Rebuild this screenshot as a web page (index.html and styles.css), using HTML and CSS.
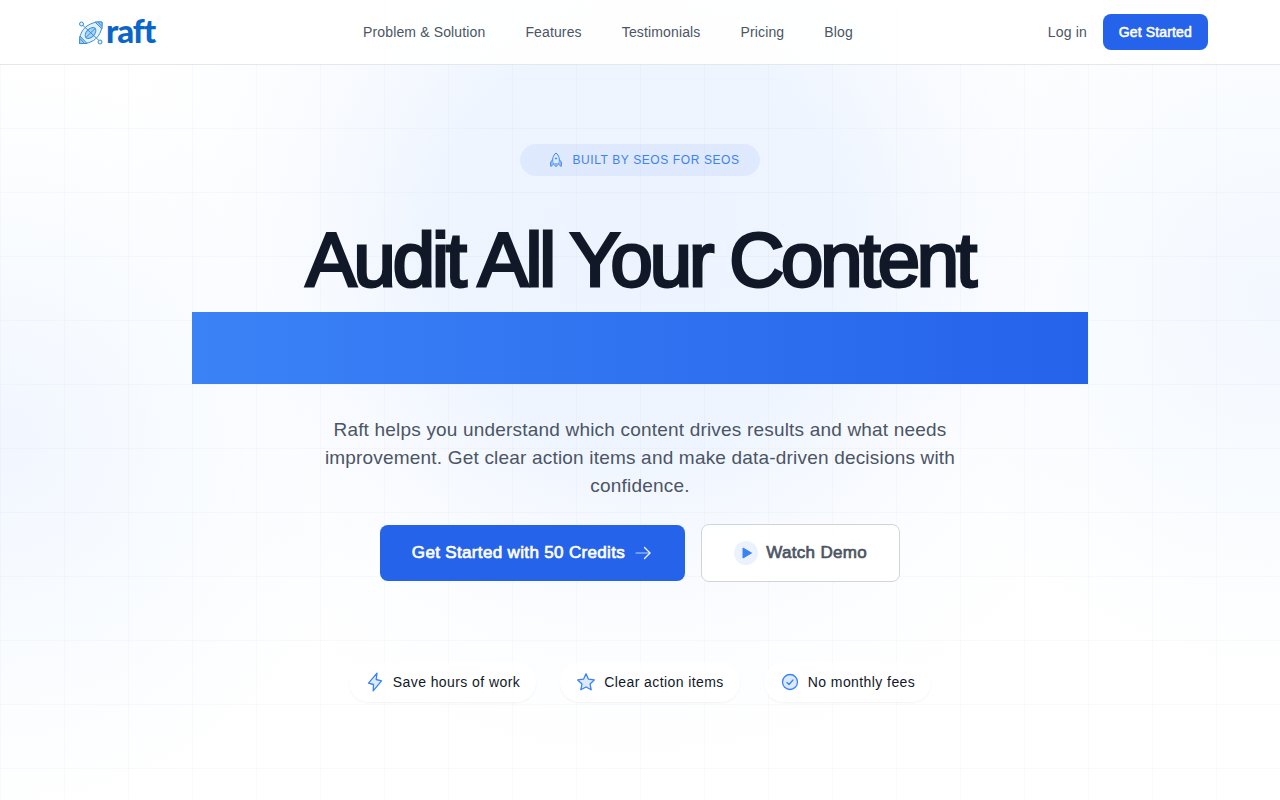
FILE: index.html
```html
<!DOCTYPE html>
<html lang="en">

<head>
  <meta charset="UTF-8">
  <meta name="viewport" content="width=device-width, initial-scale=1">
  <title>Raft</title>
  <link rel="stylesheet" href="styles.css">
</head>

<body>
  <header>
    <div class="header-inner">
      <a href="#" class="logo">
        <svg width="26" height="26" viewBox="0 0 26 26" fill="none" stroke="#3a8fdb" stroke-width="1">
          <path d="M1.500 24.500C1 17 4 10.500 9 7C13 4.200 18 2.500 24 3C24.500 9 22.500 15.500 17.500 20C13 23.500 8 25 1.500 24.500Z" fill="#e3f1fc" />
          <path d="M2 17L9 24.500L1.500 24.500ZM17 3L24 10L24 3Z" fill="#a5d0f3" />
          <path d="M2.500 20L6 24M20 3L23.500 7" />
          <ellipse cx="12.500" cy="14" rx="6.500" ry="4" transform="rotate(-45 12.500 14)" fill="#a9d3f5" />
          <path d="M4.500 6L21.500 22M8 18.500L17 9.500" />
          <circle cx="3.500" cy="5" r="2" fill="#e3f1fc" />
          <circle cx="22" cy="23" r="2" fill="#e3f1fc" />
        </svg>
        <span>raft</span>
      </a>

      <nav>
        <ul>
          <li><a href="#">Problem &amp; Solution</a></li>
          <li><a href="#">Features</a></li>
          <li><a href="#">Testimonials</a></li>
          <li><a href="#">Pricing</a></li>
          <li><a href="#">Blog</a></li>
        </ul>
      </nav>

      <div class="account">
        <a href="#">Log in</a>
        <button type="button" class="btn-small">Get Started</button>
      </div>
    </div>
  </header>

  <main class="hero">
    <div class="badge">
      <svg width="16" height="16" viewBox="0 0 16 16" fill="none" stroke="#3b82f6">
        <path d="M5 12C4 7 5 3.500 8 1C11 3.500 12 7 11 12Z" fill="#dbeafe" />
        <path d="M4.500 8C2.500 9.500 2 11.500 3 14.500L5 12.500M11.500 8C13.500 9.500 14 11.500 13 14.500L11 12.500" fill="#93bbfa" />
        <path d="M6 13.500H10M7 14.500H9" stroke="#7aa9f8" />
        <circle cx="8" cy="6.500" r="0.600" fill="#3b82f6" />
      </svg>
      <span>BUILT BY SEOS FOR SEOS</span>
    </div>

    <h1>Audit All Your Content <span class="bar"></span></h1>

    <p>Raft helps you understand which content drives results and what needs improvement. Get clear action items and
      make data-driven decisions with confidence.</p>

    <div class="actions">
      <button type="button" class="btn btn-primary">
        Get Started with 50 Credits
        <svg width="20" height="20" viewBox="0 0 20 20" fill="none" stroke="#fff" stroke-linecap="round" stroke-linejoin="round">
          <path d="M3 10H17" opacity="0.700" />
          <path d="M11.500 4.500L17 10L11.500 15.500" stroke-width="1.200" />
        </svg>
      </button>
      <button type="button" class="btn btn-demo">
        <span class="play">
          <svg width="12" height="12" viewBox="0 0 12 12" fill="#3b82f6" stroke="#3b82f6" stroke-linejoin="round">
            <path d="M2 1L10.500 6L2 11Z" />
          </svg>
        </span>
        Watch Demo
      </button>
    </div>

    <ul class="benefits">
      <li>
        <svg width="20" height="20" viewBox="0 0 20 20" fill="#dbeafe" stroke="#3b82f6" stroke-width="1.300" stroke-linejoin="round">
          <path d="M12 1.200L3.500 11.200L8.500 12.500L8.200 18.800L16.500 8.800L11.200 7.500Z" />
        </svg>
        Save hours of work
      </li>
      <li>
        <svg width="20" height="20" viewBox="0 0 20 20" fill="#dbeafe" stroke="#3b82f6" stroke-width="1.300" stroke-linejoin="round">
          <path d="M10 1.800L12.500 7.200L18.300 7.900L14 11.900L15.200 17.800L10 15L4.800 17.800L6 11.900L1.700 7.900L7.500 7.200Z" />
        </svg>
        Clear action items
      </li>
      <li>
        <svg width="20" height="20" viewBox="0 0 20 20" fill="none" stroke="#3b82f6" stroke-width="1.300" stroke-linecap="round" stroke-linejoin="round">
          <circle cx="10" cy="10" r="7.500" fill="#dbeafe" />
          <path d="M7 10.500L9 12.500L13 8" />
        </svg>
        No monthly fees
      </li>
    </ul>
  </main>
</body>

</html>
```

FILE: styles.css
```css
* {
  box-sizing: border-box;
}

body {
  margin: 0;
  min-height: 100vh;
  font-family: "Liberation Sans", Arial, sans-serif;
  font-size: 14px;
  line-height: 20px;
  color: #4b5563;
  background-color: #fff;
  background-image:
    linear-gradient(to right, #8080800a 1px, transparent 1px),
    linear-gradient(to bottom, #8080800a 1px, transparent 1px),
    radial-gradient(circle at 50% 240px, #edf4ff 0, #eef5ff 200px, #f3f7ffcc 290px, #f9fbff80 400px, transparent 540px),
    radial-gradient(circle at 0 440px, #f1f6ff 0, #f8fbff 180px, transparent 380px),
    radial-gradient(circle at 100% 300px, #f3f7ff 0, #f8fbff 180px, transparent 380px);
  background-size: 64px 64px, 64px 64px, auto, auto, auto;
}

a {
  color: inherit;
  text-decoration: none;
}

ul {
  list-style: none;
  margin: 0;
  padding: 0;
}

button {
  font: inherit;
  cursor: pointer;
}

svg {
  flex-shrink: 0;
}

header {
  border-bottom: 1px solid #e5e7eb;
  background-color: #ffffffe6;
  letter-spacing: 0.01em;
}

.header-inner {
  display: flex;
  align-items: center;
  justify-content: space-between;
  height: 64px;
  padding: 0 72px;
}

.logo {
  display: flex;
  align-items: center;
  gap: 2px;
  width: 96px;
  padding-left: 6px;
}

.logo>span {
  padding-bottom: 4px;
  font-family: Lato, sans-serif;
  font-weight: 900;
  font-size: 33px;
  line-height: 32px;
  letter-spacing: -1px;
  color: #0a66c8;
}

nav>ul {
  display: flex;
  gap: 40px;
}

.account {
  display: flex;
  align-items: center;
  gap: 16px;
}

/* the heavy text is the regular face with a thin outline */
.btn-small,
.btn {
  -webkit-text-stroke: 0.04em;
}

.btn-small {
  height: 36px;
  padding: 0 16px;
  border: 0;
  border-radius: 8px;
  background-color: #2563eb;
  color: #fff;
  letter-spacing: inherit;
}

.hero {
  display: flex;
  flex-direction: column;
  align-items: center;
  max-width: 896px;
  margin: 0 auto;
  padding-top: 79px;
  text-align: center;
}

.badge {
  display: flex;
  align-items: center;
  gap: 8px;
  height: 32px;
  padding: 0 20px 0 28px;
  border-radius: 16px;
  background-color: #2563eb12;
  color: #3b82f6;
  font-size: 12px;
  letter-spacing: 0.05em;
}

h1 {
  width: 100%;
  margin: 48px 0 32px;
  font-size: 76px;
  font-weight: 400;
  line-height: 72px;
  letter-spacing: -0.04em;
  color: #111827;
  -webkit-text-stroke: 3px;
}

.bar {
  display: block;
  height: 72px;
  margin-top: 16px;
  background: linear-gradient(to right, #3b82f6, #2563eb);
}

.hero>p {
  max-width: 640px;
  margin: 0 0 24px;
  font-size: 19px;
  line-height: 28px;
  letter-spacing: 0.01em;
}

.actions {
  display: flex;
  align-items: center;
  gap: 16px;
}

.btn {
  display: flex;
  align-items: center;
  gap: 8px;
  height: 56px;
  padding: 0 32px;
  border: 0;
  border-radius: 8px;
  font-size: 17px;
  letter-spacing: 0.02em;
}

.btn-primary {
  background-color: #2563eb;
  color: #fff;
}

.btn-demo {
  height: 58px;
  border: 1px solid #d1d5db;
  background-color: #ffffffe6;
  color: #4b5563;
}

.play {
  display: flex;
  align-items: center;
  justify-content: center;
  width: 24px;
  height: 24px;
  padding-left: 2px;
  border-radius: 50%;
  background-color: #3b82f61a;
}

.benefits {
  display: flex;
  gap: 24px;
  margin-top: 80px;
}

.benefits>li {
  display: flex;
  align-items: center;
  gap: 8px;
  height: 40px;
  padding: 0 16px;
  border-radius: 20px;
  background-color: #ffffffcc;
  box-shadow: 0 1px 2px #0000000d;
  color: #111827;
  letter-spacing: 0.03em;
}
```
